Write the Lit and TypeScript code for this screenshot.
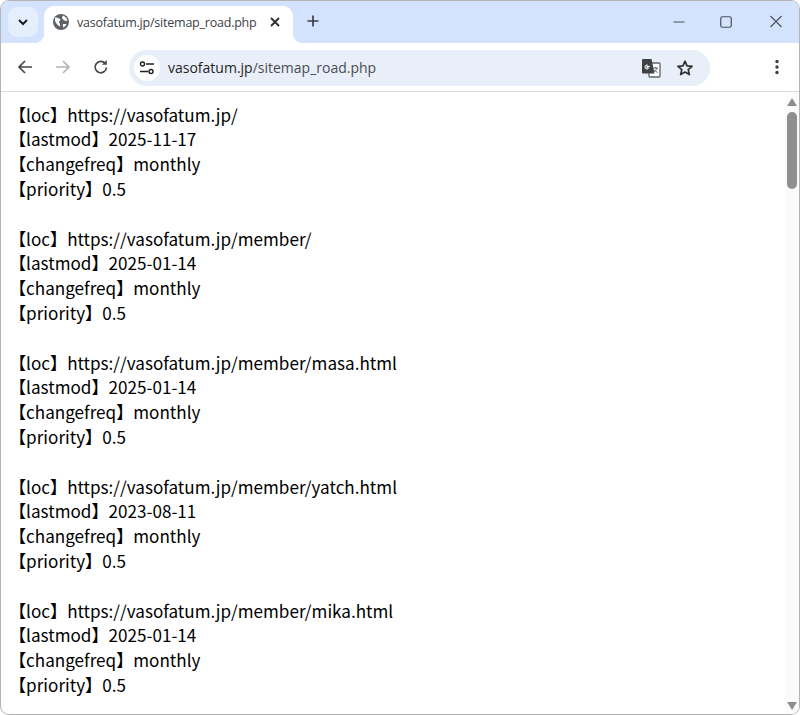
import { LitElement, html, css, svg } from "lit";
import { customElement } from "lit/decorators.js";

const ENTRIES = [
  ["https://vasofatum.jp/", "2025-11-17"],
  ["https://vasofatum.jp/member/", "2025-01-14"],
  ["https://vasofatum.jp/member/masa.html", "2025-01-14"],
  ["https://vasofatum.jp/member/yatch.html", "2023-08-11"],
  ["https://vasofatum.jp/member/mika.html", "2025-01-14"],
];

const ic = (w: number, body: unknown) => html`<svg width=${w} height=${w} viewBox="0 0 ${w} ${w}" fill="none">${body}</svg>`;

@customElement("app-root")
export class AppRoot extends LitElement {
  static styles = css`
    :host { display: block; width: 800px; height: 715px; background: #fff; }
    * { box-sizing: border-box; }
    .window {
      width: 800px; height: 715px; display: flex; flex-direction: column; overflow: hidden;
      border: 1px solid #b4b4b4; border-radius: 9px; background: #fff;
      font-family: "Open Sans", "Noto Sans", sans-serif;
    }
    .tabstrip { height: 42px; flex: none; background: #d3e3fd; display: flex; align-items: flex-end; padding-left: 7px; position: relative; }
    .tabsearch { width: 30px; height: 30px; border-radius: 9px; background: #e4eefd; display: flex; align-items: center; justify-content: center; align-self: flex-start; margin-top: 6px; flex: none; }
    .tab { width: 249px; height: 37px; margin-left: 6px; background: #fff; border-radius: 10px 10px 0 0; display: flex; align-items: center; padding: 0 11px 5px 9px; position: relative; flex: none; }
    .tab::before, .tab::after { content: ""; position: absolute; bottom: 0; width: 10px; height: 10px; background: #fff; }
    .tab::after { right: -10px; -webkit-mask: radial-gradient(circle at 100% 0, transparent 10px, #000 10.5px); mask: radial-gradient(circle at 100% 0, transparent 10px, #000 10.5px); }
    .tab::before { left: -10px; -webkit-mask: radial-gradient(circle at 0 0, transparent 10px, #000 10.5px); mask: radial-gradient(circle at 0 0, transparent 10px, #000 10.5px); }
    .tabtitle { font-size: 12.5px; color: #3c4043; margin-left: 8px; flex: 1; white-space: nowrap; letter-spacing: -0.22px; }
    .newtab { margin-left: 13px; align-self: flex-start; margin-top: 13px; display: flex; }
    .winctl { margin-left: auto; display: flex; align-self: flex-start; margin-top: 14px; gap: 34.5px; padding-right: 16.5px; }
    .toolbar { height: 49px; flex: none; background: #fff; border-bottom: 1px solid #dcdcdc; display: flex; align-items: center; padding: 0 0 0 15px; }
    .nav { display: flex; align-items: center; gap: 20px; flex: none; }
    .omnibox { margin: 1px 0 0 19px; width: 581px; height: 36px; border-radius: 18px; background: #e9eff9; display: flex; align-items: center; padding-left: 5px; flex: none; }
    .tune { width: 26px; height: 26px; border-radius: 50%; background: #fff; display: flex; align-items: center; justify-content: center; flex: none; }
    .url { margin-left: 8px; font-size: 14px; color: #1f1f1f; white-space: nowrap; flex: 1; }
    .url span { color: #4a4d51; }
    .omni-right { display: flex; align-items: center; gap: 15px; padding-right: 16px; }
    .menu { margin-left: 59px; display: flex; }
    .body { flex: 1; min-height: 0; display: flex; position: relative; overflow: hidden; }
    .content { flex: 1; padding: 10.6px 8px 0 8px; font-family: "Noto Sans CJK JP", "Noto Sans", sans-serif; font-size: 17.1px; line-height: 24.8px; color: #000; overflow: hidden; }
    .entry { margin-bottom: 24.8px; }
    .line { white-space: nowrap; height: 24.8px; }
    .scrollbar { width: 14px; flex: none; background: #fbfbfb; display: flex; flex-direction: column; align-items: center; padding: 6px 0 4px; justify-content: space-between; position: relative; }
    .thumb { position: absolute; left: 2.3px; top: 20px; width: 9.5px; height: 77px; border-radius: 5px; background: #8f8f8f; }
  `;

  render() {
    return html`<div class="window">
      <div class="tabstrip">
        <div class="tabsearch">${ic(14, svg`<path d="M3 5l4 4 4-4" stroke="#1f1f1f" stroke-width="2"/>`)}</div>
        <div class="tab">
          ${ic(16, svg`<circle cx="8" cy="8" r="8" fill="#5f6368"/><path d="M2 3.500c2 0 3.500.5 5 1.500.6 1 .2 2-1 2.200-.4 1 .3 1.800 1 2.300v3c-1.800-.3-4-3-5-5.500zM10 1.500c2.500 1 4 3 4.500 5-1.200.6-2.500.5-3.500-.2-.4-1-2-1.300-2-2.800.4-.8.800-1.500 1-2z M10 10h3.500c-.5 1.500-1.500 2.800-3 3.500-.7-1-.8-2.500-.5-3.500z" fill="#fff"/>`)}
          <span class="tabtitle">vasofatum.jp/sitemap_road.php</span>
          ${ic(14, svg`<path d="M3 3l8 8M11 3l-8 8" stroke="#2a2c2f" stroke-width="1.800"/>`)}
        </div>
        <div class="newtab">${ic(14, svg`<path d="M7 1.500v11M1.500 7h11" stroke="#3c4043" stroke-width="1.700"/>`)}</div>
        <div class="winctl">
          ${ic(14, svg`<path d="M1.500 7h11" stroke="#4a4f57" stroke-width="1.200"/>`)}
          ${ic(14, svg`<rect x="0.750" y="1.750" width="10.500" height="10.500" rx="1.800" stroke="#4a4f57" stroke-width="1.200"/>`)}
          ${ic(14, svg`<path d="M1.500 1l11 11M12.500 1l-11 11" stroke="#4a4f57" stroke-width="1.100"/>`)}
        </div>
      </div>
      <div class="toolbar">
        <div class="nav">
          ${ic(18, svg`<path d="M16 9H3M9 3L3 9l6 6" stroke="#474747" stroke-width="1.700"/>`)}
          ${ic(18, svg`<path d="M2 9h13M9 3l6 6-6 6" stroke="#b0b3b7" stroke-width="1.700"/>`)}
          ${ic(18, svg`<path d="M14.500 9.500A5.700 5.700 0 1 1 13 5.200" stroke="#474747" stroke-width="1.700"/><path d="M14.800 2v4.800H10z" fill="#474747"/>`)}
        </div>
        <div class="omnibox">
          <div class="tune">${ic(16, svg`<circle cx="3.500" cy="4" r="2" stroke="#1f1f1f" stroke-width="1.400"/><path d="M7 4h8M1 11.500h8" stroke="#1f1f1f" stroke-width="1.400"/><circle cx="12" cy="11.500" r="2" stroke="#1f1f1f" stroke-width="1.400"/>`)}</div>
          <div class="url">vasofatum.jp<span>/sitemap_road.php</span></div>
          <div class="omni-right">
            ${ic(20, svg`<rect x="8" y="5" width="11" height="14" rx="1" fill="#fff" stroke="#5f6368" stroke-width="1.300"/><path d="M2 1h8.500l3 14.500H2a1 1 0 0 1-1-1V2a1 1 0 0 1 1-1z" fill="#3f4144"/><path d="M9 8.500H5.800v1.300h1.800c-.2.800-.8 1.200-1.600 1.200a2 2 0 0 1 0-4c.5 0 .9.200 1.200.4" stroke="#fff" stroke-width="1" fill="none"/><path d="M12 10h5M14.500 9v1M16 10c-.5 2-2 3.500-4 4.500M13 11.500c.7 1.200 2 2.200 3.500 3" stroke="#5f6368" stroke-width="1"/>`)}
            ${ic(18, svg`<path d="M9 2.200l2 4.700 5.100.4-3.900 3.300 1.200 5L9 13l-4.400 2.600 1.200-5-3.900-3.300L7 6.900z" stroke="#2e2f31" stroke-width="1.700" stroke-linejoin="round"/>`)}
          </div>
        </div>
        <div class="menu">${ic(16, svg`<circle cx="8" cy="2.500" r="1.700" fill="#3c4043"/><circle cx="8" cy="8" r="1.700" fill="#3c4043"/><circle cx="8" cy="13.500" r="1.700" fill="#3c4043"/>`)}</div>
      </div>
      <div class="body">
        <div class="content">
          ${ENTRIES.map(([loc, mod]) => html`<div class="entry">
            <div class="line">【loc】${loc}</div>
            <div class="line">【lastmod】${mod}</div>
            <div class="line">【changefreq】monthly</div>
            <div class="line">【priority】0.5</div>
          </div>`)}
        </div>
        <div class="scrollbar">
          <svg width="10" height="8" viewBox="0 0 10 8"><path d="M5 0l5 8H0z" fill="#8f8f8f"/></svg>
          <div class="thumb"></div>
          <svg width="10" height="8" viewBox="0 0 10 8"><path d="M5 8L0 0h10z" fill="#8f8f8f"/></svg>
        </div>
      </div>
    </div>`;
  }
}
